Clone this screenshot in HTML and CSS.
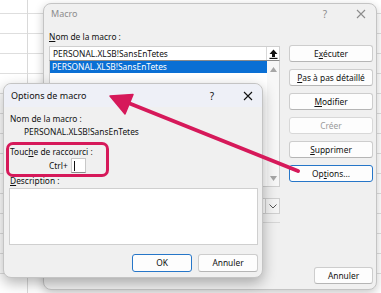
FILE: index.html
```html
<!DOCTYPE html>
<html lang="fr">
<head>
<meta charset="utf-8">
<title>Options de macro</title>
<link rel="stylesheet" href="styles.css">
</head>
<body>
<div class="sheet">
  <div class="dlg macro">
    <div class="titlebar inactive">
      <span class="title">Macro</span>
      <span class="tb-btns">
        <span class="help">?</span>
        <svg class="close" width="10" height="10" viewBox="0 0 10 10"><path d="M1 1L9 9M9 1L1 9" stroke="currentColor" stroke-width="1.1" fill="none"/></svg>
      </span>
    </div>
    <div class="macro-body">
      <div class="left-col">
        <div class="lbl"><u>N</u>om de la macro :</div>
        <div class="name-input">
          <span class="txt">PERSONAL.XLSB!SansEnTetes</span>
          <span class="refbtn"><svg width="9" height="10" viewBox="0 0 9 10"><path d="M4.5 0.5L8.5 5H6V8H3V5H0.5Z" fill="#111"/><rect x="0.5" y="8.8" width="8" height="1.2" fill="#111"/></svg></span>
        </div>
        <div class="listbox">
          <div class="items">
            <div class="item sel">PERSONAL.XLSB!SansEnTetes</div>
          </div>
          <div class="vscroll">
            <svg width="7" height="5" viewBox="0 0 7 5"><path d="M3.5 0L7 5H0Z" fill="#a6a6a6"/></svg>
            <svg width="7" height="5" viewBox="0 0 7 5"><path d="M0 0H7L3.5 5Z" fill="#a6a6a6"/></svg>
          </div>
        </div>
        <div class="lbl small">Macros d<u>a</u>ns :</div>
        <div class="combo">
          <span class="txt">Tous les classeurs ouverts</span>
          <span class="chev"><svg width="8" height="5" viewBox="0 0 8 5"><path d="M0.5 0.5L4 4L7.5 0.5" stroke="#555" stroke-width="1" fill="none"/></svg></span>
        </div>
        <div class="sep"></div>
      </div>
      <div class="right-col">
        <button class="btn">E<u>x</u>écuter</button>
        <button class="btn"><u>P</u>as à pas détaillé</button>
        <button class="btn"><u>M</u>odifier</button>
        <button class="btn disabled">Créer</button>
        <button class="btn"><u>S</u>upprimer</button>
        <button class="btn focus">Op<u>t</u>ions...</button>
        <button class="btn cancel">Annuler</button>
      </div>
    </div>
  </div>

  <div class="dlg options">
    <div class="titlebar active">
      <span class="title">Options de macro</span>
      <span class="tb-btns">
        <span class="help">?</span>
        <svg class="close" width="10" height="10" viewBox="0 0 10 10"><path d="M1 1L9 9M9 1L1 9" stroke="currentColor" stroke-width="1.1" fill="none"/></svg>
      </span>
    </div>
    <div class="opt-body">
      <div class="lbl">Nom de la macro :</div>
      <div class="lbl value">PERSONAL.XLSB!SansEnTetes</div>
      <div class="lbl gap">Touc<u>h</u>e de raccourci :</div>
      <div class="ctrl-row">
        <span>Ctrl+</span>
        <span class="keybox"><span class="caret"></span></span>
      </div>
      <div class="lbl"><u>D</u>escription :</div>
      <div class="textarea"></div>
      <div class="opt-btns">
        <button class="btn wide default">OK</button>
        <button class="btn wide">Annuler</button>
      </div>
    </div>
  </div>

  <div class="highlight-box"></div>
  <svg class="arrow" width="381" height="293" viewBox="0 0 381 293">
    <line x1="298" y1="171" x2="126" y2="102" stroke="#d6195a" stroke-width="4" stroke-linecap="round"/>
    <path d="M110 96L133 94.5L125 114Z" fill="#d6195a" stroke="#d6195a" stroke-width="1.5" stroke-linejoin="round"/>
  </svg>
</div>
</body>
</html>
```

FILE: styles.css
```css
* { box-sizing: border-box; }
html, body { margin: 0; padding: 0; }
body {
  width: 381px;
  height: 293px;
  overflow: hidden;
  font-family: "Noto Sans", "Open Sans", sans-serif;
  font-size: 8.4px;
  color: #111;
}
.sheet {
  position: relative;
  width: 381px;
  height: 293px;
  background-color: #fff;
  background-image:
    linear-gradient(to right, transparent 27px, #d9d9d9 27px, #d9d9d9 28px, transparent 28px),
    repeating-linear-gradient(to bottom, transparent 0, transparent 19px, #dedede 19px, #dedede 20px);
  background-position: 0 0, 0 -6px;
}
u { text-decoration-thickness: 1px; text-underline-offset: 1px; }

.dlg {
  position: absolute;
  background: #f0f0f0;
  border: 1px solid #c4c4c4;
  border-radius: 8px;
  display: flex;
  flex-direction: column;
}
.macro {
  left: 43px; top: 3px; width: 334px; height: 287px;
  box-shadow: 0 3px 10px rgba(0,0,0,0.22);
}
.options {
  left: 3px; top: 83px; width: 260px; height: 195px;
  box-shadow: 0 5px 14px rgba(0,0,0,0.3);
  overflow: hidden;
}

.titlebar {
  display: flex;
  align-items: center;
  justify-content: space-between;
  flex: none;
}
.titlebar.inactive { height: 26px; padding: 0 10px 7px 7px; color: #8c8c8c; }
.titlebar.active { height: 23px; padding: 0 9px 0 7px; background: #eef0f7; color: #111; border-radius: 7px 7px 0 0; }
.title { font-size: 9px; }
.tb-btns { display: flex; align-items: center; gap: 27px; }
.help { font-size: 10px; width: 8px; text-align: center; }
.close { display: block; }

.macro-body {
  flex: 1;
  display: flex;
  gap: 9px;
  padding: 0 3px 5px 5px;
}
.left-col {
  width: 231px;
  display: flex;
  flex-direction: column;
}
.lbl { height: 14px; line-height: 14px; white-space: nowrap; }
.macro .lbl { height: 16px; line-height: 14px; }
.name-input {
  height: 15px;
  background: #fff;
  border: 1px solid #cfcfcf;
  border-bottom-color: #8a8a8a;
  display: flex;
  align-items: center;
  justify-content: space-between;
  padding-left: 3px;
}
.refbtn {
  width: 13px; height: 13px;
  border-left: 1px solid #d8d8d8;
  display: flex; align-items: center; justify-content: center;
}
.listbox {
  height: 126px;
  background: #fff;
  border: 1px solid #cfcfcf;
  border-top: none;
  display: flex;
}
.items { flex: 1; }
.item { height: 12px; line-height: 12px; padding-left: 2px; white-space: nowrap; }
.item.sel { background: #0a6fd4; color: #fff; }
.vscroll {
  width: 12px;
  display: flex;
  flex-direction: column;
  justify-content: space-between;
  align-items: center;
  padding: 6px 0 5px;
  background: #f7f7f7;
}
.macro .lbl.small { height: 11px; line-height: 11px; }
.combo {
  height: 16px;
  background: #fff;
  border: 1px solid #cfcfcf;
  display: flex;
  align-items: center;
  justify-content: space-between;
  padding-left: 3px;
}
.chev {
  width: 14px; height: 14px;
  border-left: 1px solid #cfcfcf;
  background: #f4f4f4;
  display: flex; align-items: center; justify-content: center;
}
.sep { height: 1px; background: #d6d6d6; margin-top: 8px; }

.right-col {
  width: 84px;
  display: flex;
  flex-direction: column;
  gap: 7px;
  padding-top: 15px;
}
.btn {
  font: inherit;
  color: #111;
  height: 17px;
  padding: 0;
  background: #fdfdfd;
  border: 1px solid #cdcdcd;
  border-bottom-color: #b5b5b5;
  border-radius: 3px;
  line-height: 14px;
  white-space: nowrap;
  text-align: center;
}
.btn.disabled { color: #9a9a9a; border-color: #d8d8d8; }
.btn.focus { border: 1.5px solid #2676c8; }
.btn.cancel { margin-top: auto; width: 59px; align-self: flex-end; }

.opt-body {
  flex: 1;
  display: flex;
  flex-direction: column;
  padding: 5px 4px 5px 5px;
}
.opt-body .lbl { padding-left: 1px; height: 13px; line-height: 13px; }
.opt-body .lbl.value { padding-left: 15px; }
.opt-body .lbl.gap { margin-top: 7px; }
.ctrl-row {
  height: 15px;
  display: flex;
  align-items: center;
  gap: 3px;
  padding-left: 40px;
}
.keybox {
  width: 15px; height: 15px;
  background: #fff;
  border: 1px solid #c8c8c8;
  border-bottom-color: #8a8a8a;
  display: flex; align-items: center;
  padding-left: 2px;
}
.caret { width: 1px; height: 10px; background: #111; }
.opt-body .lbl + .textarea { margin-top: 1px; }
.ctrl-row + .lbl { margin-top: 1px; }
.textarea {
  height: 57px;
  background: #fff;
  border: 1px solid #cfcfcf;
}
.opt-btns {
  display: flex;
  justify-content: flex-end;
  gap: 6px;
  margin-top: 9px;
}
.btn.wide { width: 60px; height: 18px; }
.btn.default { border: 1.5px solid #2676c8; }

.highlight-box {
  position: absolute;
  left: 6px; top: 142px;
  width: 103px; height: 35px;
  border: 3px solid #d6195a;
  border-radius: 7px;
}
.arrow { position: absolute; left: 0; top: 0; pointer-events: none; }
```
